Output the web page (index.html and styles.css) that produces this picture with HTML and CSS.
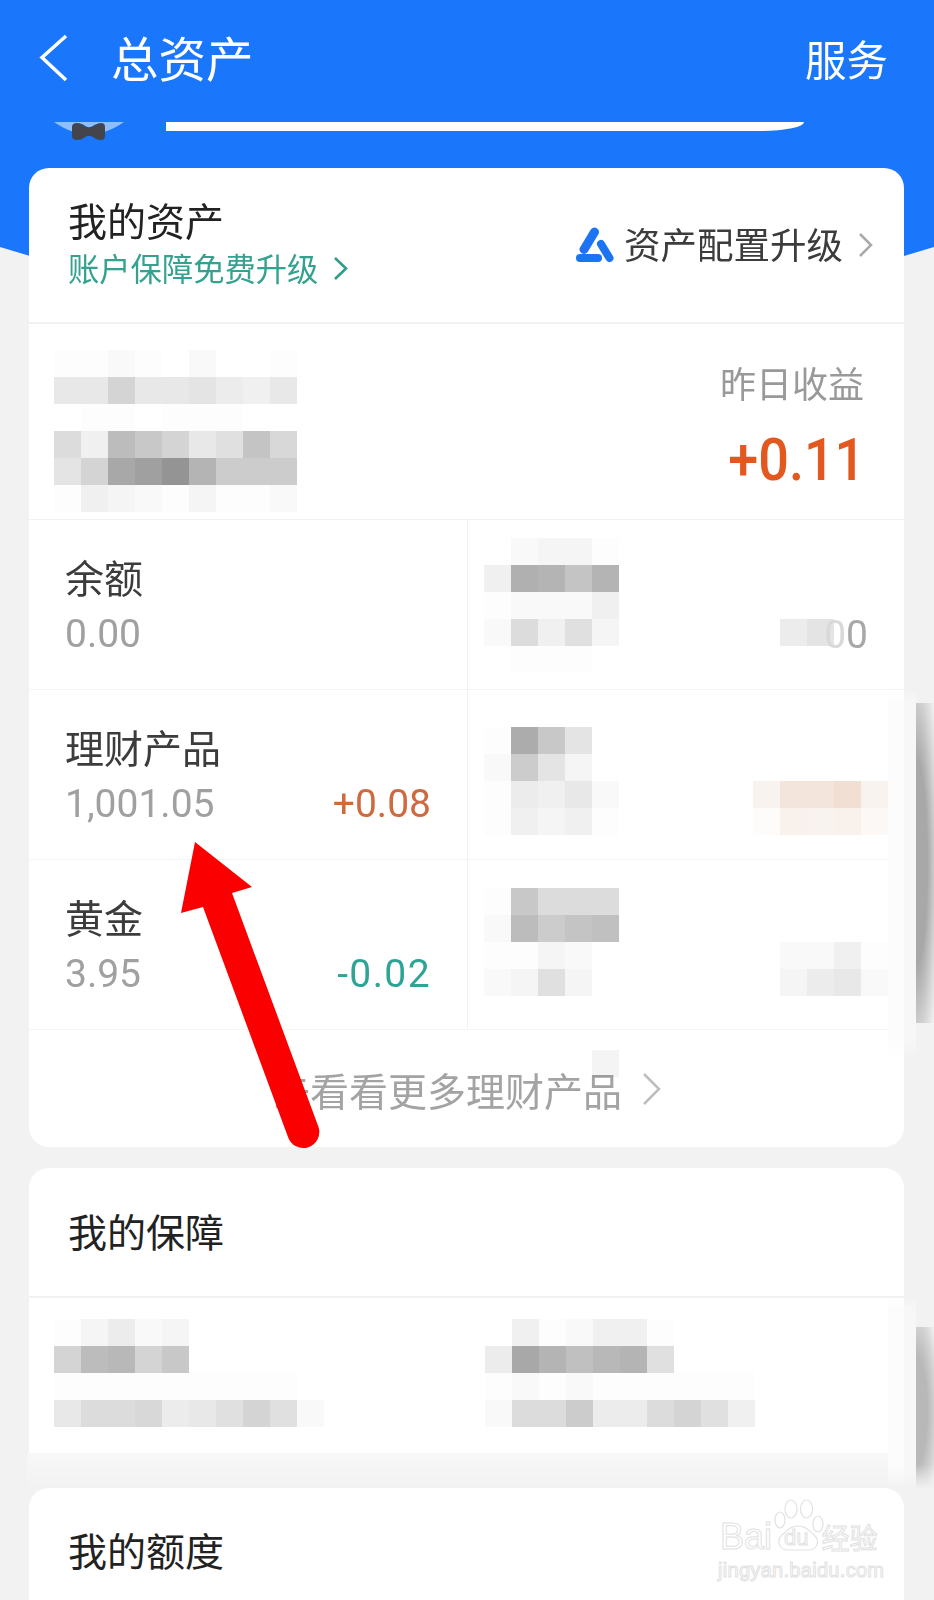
FILE: index.html
```html
<!DOCTYPE html>
<html>
<head>
    <meta charset="utf-8">
    <title>总资产</title>
    <link rel="stylesheet" href="styles.css">
</head>
<body>
<div class="page">
    <div class="hero"></div>

    <div class="topbar">
        <svg class="back" width="30" height="50" viewBox="0 0 30 50"><path d="M27 3 L3 24.500 L27 47" fill="none" stroke="#fff" stroke-width="3.500"/></svg>
        <div class="topbar-title">总资产</div>
        <div class="topbar-link">服务</div>
    </div>

    <div class="tease">
        <svg class="bowtie" width="72" height="20" viewBox="0 0 72 20">
            <path d="M0 0 H70 Q60 7 50 10 H20 Q10 7 0 0 Z" fill="#8fbef8"/>
            <path d="M18 5 Q18 1 23 1 Q28 1 32 4.500 Q35 6 38 4.500 Q43 1 47 1 Q51 1 51 5 V14 Q51 18 47 18 Q43 18 38 14.500 Q35 13 32 14.500 Q28 18 23 18 Q18 18 18 14 Z" fill="#43444c"/>
        </svg>
        <div class="tease-bar"></div>
    </div>

    <div class="card">
        <div class="card-head">
            <div>
                <div class="card-title">我的资产</div>
                <div class="card-sub">账户保障免费升级
                    <svg class="chev-green" width="16" height="25" viewBox="0 0 16 25"><path d="M2 2 L13 12.500 L2 23" fill="none" stroke="#2f9d8b" stroke-width="2.600"/></svg>
                </div>
            </div>
            <div class="card-action">
                <svg width="40" height="36" viewBox="0 0 40 36">
                    <path d="M19.500 5 L9 22.500" stroke="#1c74f2" stroke-width="9" stroke-linecap="round" fill="none"/>
                    <path d="M26 17 L34.500 31" stroke="#1c74f2" stroke-width="8" stroke-linecap="round" fill="none"/>
                    <path d="M5 31 H23" stroke="#1c74f2" stroke-width="8" stroke-linecap="round" fill="none"/>
                </svg>
                <span class="card-action-text">资产配置升级</span>
                <svg class="chev-grey" width="15" height="26" viewBox="0 0 15 26"><path d="M2 2 L13 13 L2 24" fill="none" stroke="#a9a9a9" stroke-width="2.500"/></svg>
            </div>
        </div>

        <div class="summary">
            <div class="mosaic cols-9">
                <i class="fc"></i><i class="fc"></i><i class="f8"></i><i class="fc"></i><i class="ff"></i><i class="f8"></i><i class="ff"></i><i class="ff"></i><i class="fc"></i>
                <i class="e8"></i><i class="e8"></i><i class="d4"></i><i class="e8"></i><i class="e8"></i><i class="e4"></i><i class="ec"></i><i class="f0"></i><i class="e8"></i>
                <i class="ff"></i><i class="fc"></i><i class="fc"></i><i class="ff"></i><i class="fc"></i><i class="fc"></i><i class="fc"></i><i class="ff"></i><i class="ff"></i>
                <i class="dc"></i><i class="f0"></i><i class="bc"></i><i class="c8"></i><i class="d4"></i><i class="e8"></i><i class="e0"></i><i class="c4"></i><i class="d8"></i>
                <i class="e4"></i><i class="d4"></i><i class="a8"></i><i class="a0"></i><i class="g94"></i><i class="b4"></i><i class="cc"></i><i class="cc"></i><i class="cc"></i>
                <i class="fc"></i><i class="f0"></i><i class="f4"></i><i class="f8"></i><i class="fc"></i><i class="f4"></i><i class="fc"></i><i class="fc"></i><i class="f8"></i>
            </div>
            <div class="yield">
                <div class="yield-label">昨日收益</div>
                <div class="yield-value">+0.11</div>
            </div>
        </div>

        <div class="assets">
            <div class="asset">
                <div class="asset-name">余额</div>
                <div class="asset-line"><span class="asset-value">0.00</span></div>
            </div>
            <div class="asset asset-hidden">
                <div class="mosaic cols-5 top-18">
                    <i class="ff"></i><i class="f8"></i><i class="f4"></i><i class="f4"></i><i class="fc"></i>
                    <i class="f0"></i><i class="b0"></i><i class="b4"></i><i class="c4"></i><i class="b4"></i>
                    <i class="fc"></i><i class="f8"></i><i class="f8"></i><i class="f8"></i><i class="f0"></i>
                    <i class="f8"></i><i class="dc"></i><i class="f0"></i><i class="e0"></i><i class="f4"></i>
                    <i class="ff"></i><i class="fc"></i><i class="fc"></i><i class="fc"></i><i class="ff"></i>
                </div>
                <div class="peek top-99">
                    <div class="mosaic cols-2"><i class="ec"></i><i class="e4"></i></div>
                    <span class="peek-text"><span class="faint">0</span>0</span>
                </div>
            </div>

            <div class="asset">
                <div class="asset-name">理财产品</div>
                <div class="asset-line"><span class="asset-value">1,001.05</span><span class="gain">+0.08</span></div>
            </div>
            <div class="asset asset-hidden">
                <div class="mosaic cols-5 top-37">
                    <i class="fc"></i><i class="ac"></i><i class="c8"></i><i class="e4"></i><i class="ff"></i>
                    <i class="f8"></i><i class="cc"></i><i class="e4"></i><i class="f4"></i><i class="ff"></i>
                    <i class="fc"></i><i class="ec"></i><i class="f0"></i><i class="e8"></i><i class="f8"></i>
                    <i class="fc"></i><i class="f0"></i><i class="f4"></i><i class="f0"></i><i class="fc"></i>
                </div>
                <div class="mosaic cols-5 top-91">
                    <i class="p1"></i><i class="p2"></i><i class="p2"></i><i class="p3"></i><i class="p1"></i>
                    <i class="p5"></i><i class="p4"></i><i class="p1"></i><i class="p4"></i><i class="p6"></i>
                </div>
            </div>

            <div class="asset">
                <div class="asset-name">黄金</div>
                <div class="asset-line"><span class="asset-value">3.95</span><span class="loss">-0.02</span></div>
            </div>
            <div class="asset asset-hidden">
                <div class="mosaic cols-5 top-28">
                    <i class="fc"></i><i class="c8"></i><i class="dc"></i><i class="dc"></i><i class="dc"></i>
                    <i class="f8"></i><i class="bc"></i><i class="cc"></i><i class="c4"></i><i class="c0"></i>
                    <i class="fc"></i><i class="fc"></i><i class="f4"></i><i class="f8"></i><i class="ff"></i>
                    <i class="f8"></i><i class="f4"></i><i class="e0"></i><i class="f4"></i><i class="ff"></i>
                </div>
                <div class="mosaic cols-4 top-82">
                    <i class="f8"></i><i class="f8"></i><i class="f0"></i><i class="fc"></i>
                    <i class="f4"></i><i class="ec"></i><i class="e8"></i><i class="f8"></i>
                </div>
            </div>
        </div>

        <div class="card-more">
            <span>去看看更多理财产品</span>
            <svg width="20" height="34" viewBox="0 0 20 34"><path d="M2 2 L17 17 L2 32" fill="none" stroke="#bdbdbd" stroke-width="2.500"/></svg>
            <i class="more-cell"></i>
        </div>
    </div>

    <div class="card card-cut">
        <div class="card-head card-head-plain"><div class="card-title">我的保障</div></div>
        <div class="cover">
            <div class="mosaic cols-10">
                <i class="fc"></i><i class="f4"></i><i class="ec"></i><i class="f8"></i><i class="f4"></i><i class="ff"></i><i class="ff"></i><i class="ff"></i><i class="ff"></i><i class="ff"></i>
                <i class="d4"></i><i class="bc"></i><i class="b8"></i><i class="d4"></i><i class="c8"></i><i class="ff"></i><i class="ff"></i><i class="ff"></i><i class="ff"></i><i class="ff"></i>
                <i class="fc"></i><i class="fc"></i><i class="fc"></i><i class="fc"></i><i class="fc"></i><i class="fc"></i><i class="fc"></i><i class="fc"></i><i class="fc"></i><i class="ff"></i>
                <i class="e8"></i><i class="dc"></i><i class="dc"></i><i class="d8"></i><i class="ec"></i><i class="e8"></i><i class="e0"></i><i class="d4"></i><i class="e0"></i><i class="f8"></i>
            </div>
            <div class="mosaic cols-10">
                <i class="ff"></i><i class="f0"></i><i class="fc"></i><i class="f8"></i><i class="f0"></i><i class="f0"></i><i class="fc"></i><i class="ff"></i><i class="ff"></i><i class="ff"></i>
                <i class="ec"></i><i class="a8"></i><i class="b4"></i><i class="c0"></i><i class="b8"></i><i class="b4"></i><i class="e0"></i><i class="ff"></i><i class="ff"></i><i class="ff"></i>
                <i class="fc"></i><i class="f8"></i><i class="fc"></i><i class="f8"></i><i class="fc"></i><i class="fc"></i><i class="fc"></i><i class="fc"></i><i class="fc"></i><i class="fc"></i>
                <i class="f8"></i><i class="dc"></i><i class="dc"></i><i class="cc"></i><i class="ec"></i><i class="ec"></i><i class="dc"></i><i class="d4"></i><i class="e0"></i><i class="f0"></i>
            </div>
        </div>
    </div>
    <div class="card-fade"></div>

    <div class="card card-last">
        <div class="card-head card-head-plain"><div class="card-title">我的额度</div></div>
    </div>

    <!-- stray marks laid over the screenshot -->
    <div class="smear smear-a"></div>
    <div class="smear smear-b"></div>

    <svg class="arrow" width="160" height="310" viewBox="0 0 160 310">
        <path d="M20 0 L6 71 L28 65 L113 295 A16 16 0 0 0 143.500 285 L57 51 L77 45 Z" fill="#fb0000"/>
    </svg>

    <div class="watermark">
        <svg class="paw" width="52" height="56" viewBox="0 0 52 56" fill="none" stroke="#e2e2e2" stroke-width="1.200">
            <ellipse cx="6" cy="22" rx="5" ry="8"/>
            <ellipse cx="17" cy="11" rx="6" ry="9"/>
            <ellipse cx="32.500" cy="11" rx="6" ry="9"/>
            <ellipse cx="44" cy="26" rx="5" ry="8"/>
            <path d="M24 28 C32 28 35 33 40 37 C46 42 44 52 34 52 C28 52 20 52 14 52 C5 52 2 42 8 37 C13 33 16 28 24 28 Z"/>
        </svg>
        <div class="wm-main"><span class="wm-bai">Bai</span><span class="wm-du">du</span><span class="wm-jy">经验</span></div>
        <div class="wm-url">jingyan.baidu.com</div>
    </div>
</div>
</body>
</html>
```

FILE: styles.css
```css
* {
    box-sizing: border-box;
    margin: 0;
    padding: 0;
}

body {
    background: #f2f2f2;
    font-family: "Noto Sans CJK SC", "Noto Sans", sans-serif;
    color: #333;
}

.page {
    position: relative;
    width: 934px;
    height: 1600px;
    overflow: hidden;
}

/* blue band behind the first card, only its corners show */
.hero {
    position: absolute;
    left: 0;
    top: 0;
    width: 100%;
    height: 257px;
    background: #1a77fb;
    clip-path: polygon(0 0, 100% 0, 100% 247px, 904px 256px, 30px 256px, 0 247px);
}

.topbar {
    position: relative;
    display: flex;
    align-items: center;
    height: 122px;
    padding: 0 46px 6px 39px;
    color: #fff;
}

.back {
    margin-right: 42px;
}

.topbar-title {
    flex: 1;
    margin-bottom: 3px;
    font-size: 47.500px;
    line-height: 60px;
}

.topbar-link {
    font-size: 41.500px;
    line-height: 60px;
}

.tease {
    position: relative;
    display: flex;
    height: 46px;
    padding-left: 54px;
}

.bowtie {
    margin-right: 40px;
}

.tease-bar {
    width: 638px;
    height: 9px;
    background: #fff;
    border-radius: 0 0 42px 0 / 0 0 9px 0;
}

.card {
    position: relative;
    margin: 0 30px 21px 29px;
    background: #fff;
    border-radius: 20px;
}

.card-cut {
    height: 285px;
    margin-bottom: 0;
    border-radius: 20px 20px 0 0;
}

.card-last {
    height: 200px;
}

.card-fade {
    height: 35px;
    margin: 0 19px 0 27px;
    background: linear-gradient(#f8f8f8, #f2f2f2);
}

.card-head {
    display: flex;
    justify-content: space-between;
    height: 156px;
    padding: 28px 31px 0 39px;
    border-bottom: 2px solid #f1f1f1;
}

.card-head-plain {
    height: 130px;
    padding-top: 39px;
}

.card-last .card-head {
    padding-top: 38px;
    border-bottom: 0;
}

.card-title {
    font-size: 39px;
    line-height: 46px;
    color: #222;
}

.card-sub {
    display: flex;
    align-items: center;
    gap: 15px;
    margin-top: 4px;
    font-size: 31.300px;
    line-height: 44px;
    color: #35a28f;
}

.card-action {
    display: flex;
    align-items: center;
    height: 90px;
    margin-top: 4px;
}

.card-action svg:first-child {
    margin-right: 9px;
}

.card-action-text {
    margin-bottom: 3px;
    font-size: 36.500px;
    line-height: 50px;
    color: #3c3c3c;
}

.chev-grey {
    margin-left: 15px;
}

.summary {
    display: flex;
    justify-content: space-between;
    height: 196px;
    padding: 26px 39px 0 25px;
    border-bottom: 1px solid #f1f1f1;
}

.yield {
    text-align: right;
}

.yield-label {
    margin-top: 8px;
    margin-right: 1px;
    font-size: 36px;
    line-height: 48px;
    color: #999;
}

.yield-value {
    margin-top: 17px;
    font-family: Roboto, sans-serif;
    font-weight: 500;
    font-size: 60px;
    line-height: 74px;
    color: #e2581f;
    transform: scaleX(0.9);
    transform-origin: right center;
}

.assets {
    display: grid;
    grid-template-columns: 439px 436px;
}

.asset {
    height: 170px;
    padding: 28px 36px 0 36px;
    border-bottom: 1px solid #f4f4f4;
    border-right: 1px solid #f1f1f1;
}

.asset-hidden {
    display: flex;
    justify-content: space-between;
    align-items: flex-start;
    padding: 0 16px 0 16px;
    border-right: 0;
}

.asset-name {
    margin-bottom: 2px;
    font-size: 39px;
    line-height: 56px;
    color: #3c3c3c;
}

.asset-line {
    display: flex;
    justify-content: space-between;
    font-family: Roboto, sans-serif;
    font-size: 39px;
    line-height: 56px;
}

.asset-value {
    color: #a0a0a0;
}

.gain {
    color: #cf6a3e;
}

.loss {
    letter-spacing: 1.400px;
    color: #2ea594;
}

.peek {
    display: flex;
    align-items: flex-start;
    margin-right: 20px;
}

.peek-text {
    margin-top: 3px;
    margin-left: -10px;
    font-family: Roboto, sans-serif;
    font-size: 39px;
    line-height: 27px;
    color: #a8a8a8;
}

.faint {
    color: #d9d9d9;
}

.card-more {
    position: relative;
    display: flex;
    align-items: center;
    justify-content: center;
    gap: 20px;
    height: 117px;
    font-size: 39px;
    color: #a3a3a3;
}

.more-cell {
    position: absolute;
    left: 563px;
    top: 20px;
    width: 27px;
    height: 27px;
    background: #f4f4f4;
    mix-blend-mode: multiply;
}

.cover {
    display: flex;
    padding: 21px 0 0 25px;
    gap: 161px;
}

/* pixelated areas of the screenshot */
.mosaic {
    display: grid;
    grid-auto-rows: 27px;
    grid-template-columns: repeat(var(--cols), 27px);
}

.cols-2 { --cols: 2; }
.cols-4 { --cols: 4; }
.cols-5 { --cols: 5; }
.cols-9 { --cols: 9; }
.cols-10 { --cols: 10; }

.top-18 { margin-top: 18px; }
.top-28 { margin-top: 28px; }
.top-37 { margin-top: 37px; }
.top-82 { margin-top: 82px; }
.top-91 { margin-top: 91px; }
.top-99 { margin-top: 99px; }

.ff { background: #fff; }
.fc { background: #fdfdfd; }
.f8 { background: #f9f9f9; }
.f4 { background: #f5f5f5; }
.f0 { background: #f0f0f0; }
.ec { background: #ececec; }
.e8 { background: #e8e8e8; }
.e4 { background: #e4e4e4; }
.e0 { background: #e0e0e0; }
.dc { background: #dcdcdc; }
.d8 { background: #d8d8d8; }
.d4 { background: #d4d4d4; }
.cc { background: #ccc; }
.c8 { background: #c8c8c8; }
.c4 { background: #c4c4c4; }
.c0 { background: #c0c0c0; }
.bc { background: #bcbcbc; }
.b8 { background: #b8b8b8; }
.b4 { background: #b4b4b4; }
.b0 { background: #b0b0b0; }
.ac { background: #acacac; }
.a8 { background: #a8a8a8; }
.a0 { background: #a0a0a0; }
.g94 { background: #949494; }
.p1 { background: #f9f3ef; }
.p2 { background: #f3e4dc; }
.p3 { background: #f2dfd3; }
.p4 { background: #f8f1ec; }
.p5 { background: #fefcfb; }
.p6 { background: #fcf8f5; }

/* shadow crescent on the right edge, with the paler strip beside it */
.smear {
    position: absolute;
    left: 888px;
    width: 46px;
    background-repeat: no-repeat;
    background-image:
        linear-gradient(#f7f7f7, #f7f7f7),
        linear-gradient(#fcfcfc, #fcfcfc),
        radial-gradient(ellipse at 0 50%, var(--dark) 0, var(--dark) 45%, #d6d6d6 78%, #f2f2f2 100%);
    background-size: 12px 100%, 16px 100%, 18px var(--shadow-h);
    background-position: 16px 0, 0 0, 28px var(--shadow-top);
    mask-image: linear-gradient(transparent, #000 12px, #000 calc(100% - 24px), transparent);
}

.smear-a {
    --dark: #a8a8a8;
    --shadow-h: 320px;
    --shadow-top: 13px;
    top: 690px;
    height: 372px;
}

.smear-b {
    --dark: #b8b8b8;
    --shadow-h: 166px;
    --shadow-top: 30px;
    top: 1297px;
    height: 192px;
}

.arrow {
    position: absolute;
    left: 175px;
    top: 842px;
}

.watermark {
    position: absolute;
    left: 715px;
    top: 1498px;
    width: 172px;
    color: transparent;
    -webkit-text-stroke: 1px #e2e2e2;
}

.paw {
    position: absolute;
    left: 59px;
    top: 0;
}

.wm-main {
    position: relative;
    display: flex;
    align-items: baseline;
    height: 60px;
    padding: 17px 0 0 5px;
    font-family: "Liberation Sans", sans-serif;
    font-size: 36px;
    line-height: 44px;
    white-space: nowrap;
}

.wm-du {
    position: relative;
    top: -4px;
    margin-left: 12px;
    margin-right: 13px;
    font-size: 22px;
}

.wm-jy {
    font-family: "Noto Sans CJK SC", sans-serif;
    font-size: 28px;
}

.wm-url {
    padding-left: 3px;
    font-family: "Liberation Sans", sans-serif;
    font-size: 20px;
    line-height: 24px;
    letter-spacing: 0.300px;
    white-space: nowrap;
}
```
